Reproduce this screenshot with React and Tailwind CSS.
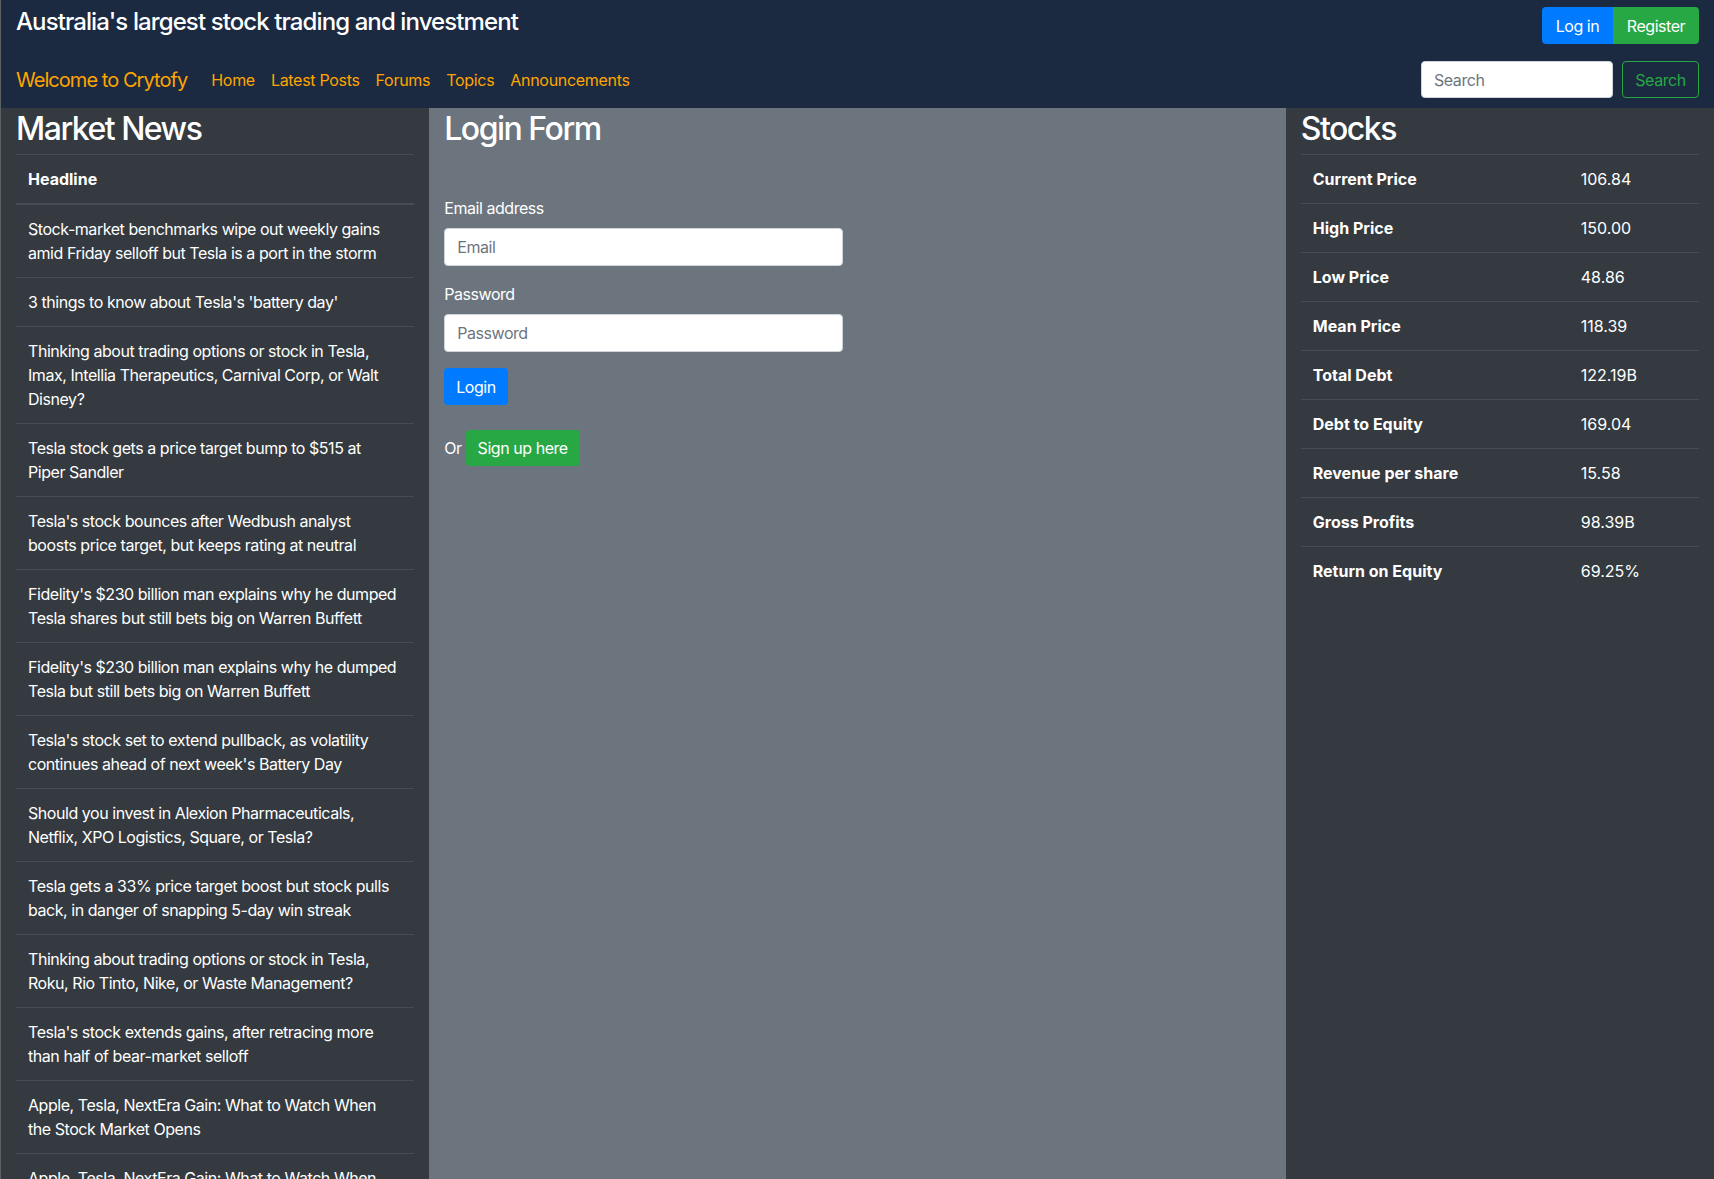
import { useState } from "react";

const headlines = [
  "Stock-market benchmarks wipe out weekly gains amid Friday selloff but Tesla is a port in the storm",
  "3 things to know about Tesla's 'battery day'",
  "Thinking about trading options or stock in Tesla, Imax, Intellia Therapeutics, Carnival Corp, or Walt Disney?",
  "Tesla stock gets a price target bump to $515 at Piper Sandler",
  "Tesla's stock bounces after Wedbush analyst boosts price target, but keeps rating at neutral",
  "Fidelity's $230 billion man explains why he dumped Tesla shares but still bets big on Warren Buffett",
  "Fidelity's $230 billion man explains why he dumped Tesla but still bets big on Warren Buffett",
  "Tesla's stock set to extend pullback, as volatility continues ahead of next week's Battery Day",
  "Should you invest in Alexion Pharmaceuticals, Netflix, XPO Logistics, Square, or Tesla?",
  "Tesla gets a 33% price target boost but stock pulls back, in danger of snapping 5-day win streak",
  "Thinking about trading options or stock in Tesla, Roku, Rio Tinto, Nike, or Waste Management?",
  "Tesla's stock extends gains, after retracing more than half of bear-market selloff",
  "Apple, Tesla, NextEra Gain: What to Watch When the Stock Market Opens",
  "Apple, Tesla, NextEra Gain: What to Watch When the Stock Market Opens",
];

const stocks = [
  ["Current Price", "106.84"],
  ["High Price", "150.00"],
  ["Low Price", "48.86"],
  ["Mean Price", "118.39"],
  ["Total Debt", "122.19B"],
  ["Debt to Equity", "169.04"],
  ["Revenue per share", "15.58"],
  ["Gross Profits", "98.39B"],
  ["Return on Equity", "69.25%"],
];

function Navbar() {
  const [query, setQuery] = useState("");
  return (
    <nav className="bg-[#1b2a41] px-[15px] pt-[7px] pb-[10px]">
      <div className="flex items-start justify-between">
        <h4 className="text-[24px] font-medium leading-[29px] tracking-[-0.9px] text-white">
          Australia's largest stock trading and investment
        </h4>
        <div className="flex">
          <button className="h-[37px] w-[71px] rounded-l bg-[#007bff] text-base text-white">
            Log in
          </button>
          <button className="h-[37px] w-[86px] rounded-r bg-[#28a745] text-base text-white">
            Register
          </button>
        </div>
      </div>
      <div className="mt-[17px] flex items-center justify-between">
        <div className="flex items-center tracking-[-0.3px]">
          <span className="mr-4 text-[20px] leading-[30px] tracking-[-0.95px] text-[#ffa500]">
            Welcome to Crytofy
          </span>
          <a className="px-2 text-base text-[#ffa500]">Home</a>
          <a className="px-2 text-base text-[#ffa500]">Latest Posts</a>
          <a className="px-2 text-base text-[#ffa500]">Forums</a>
          <a className="px-2 text-base text-[#ffa500]">Topics</a>
          <a className="px-2 text-base text-[#ffa500]">Announcements</a>
        </div>
        <div className="flex items-center">
          <input
            type="text"
            placeholder="Search"
            value={query}
            onChange={(e) => setQuery(e.target.value)}
            className="h-[37px] w-[192px] rounded border border-[#ced4da] bg-white px-3 text-base text-[#495057] placeholder:text-[#6c757d]"
          />
          <button className="ml-[9px] h-[37px] w-[77px] rounded border border-[#28a745] text-base text-[#28a745]">
            Search
          </button>
        </div>
      </div>
    </nav>
  );
}

function MarketNews() {
  return (
    <div className="bg-[#343a40] px-[15px]">
      <h2 className="mb-[6px] pt-[2px] text-[32px] font-medium leading-[38px] tracking-[-1.5px]">
        Market News
      </h2>
      <div className="text-base leading-6">
        <div className="border-t border-b-2 border-[#454d55] px-3 py-3 font-bold tracking-normal">
          Headline
        </div>
        {headlines.map((h, i) => (
          <div key={i} className={`${i > 0 ? "border-t" : ""} border-[#454d55] py-3 pl-3 pr-[14px]`}>
            {h}
          </div>
        ))}
      </div>
    </div>
  );
}

function LoginForm() {
  const [email, setEmail] = useState("");
  const [password, setPassword] = useState("");
  return (
    <div className="col-span-2 bg-[#6c757d] px-[15px]">
      <h2 className="mb-[6px] pt-[2px] text-[32px] font-medium leading-[38px] tracking-[-1.5px]">
        Login Form
      </h2>
      <form className="mt-[48px] w-[399px] text-base leading-6">
        <label className="mb-2 block">Email address</label>
        <input
          type="email"
          placeholder="Email"
          value={email}
          onChange={(e) => setEmail(e.target.value)}
          className="mb-4 block h-[38px] w-full rounded border border-[#ced4da] bg-white px-3 text-[#495057] placeholder:text-[#6c757d]"
        />
        <label className="mb-2 block">Password</label>
        <input
          type="password"
          placeholder="Password"
          value={password}
          onChange={(e) => setPassword(e.target.value)}
          className="mb-4 block h-[38px] w-full rounded border border-[#ced4da] bg-white px-3 text-[#495057] placeholder:text-[#6c757d]"
        />
        <button type="button" className="h-[37px] rounded bg-[#007bff] px-3 text-white">
          Login
        </button>
        <div className="mt-[25px] flex items-baseline gap-1">
          <span>Or</span>
          <button type="button" className="h-[36px] rounded bg-[#28a745] px-3 text-white">
            Sign up here
          </button>
        </div>
      </form>
    </div>
  );
}

function Stocks() {
  return (
    <div className="bg-[#343a40] px-[15px]">
      <h2 className="mb-[6px] pt-[2px] text-[32px] font-medium leading-[38px] tracking-[-1.5px]">
        Stocks
      </h2>
      <div className="text-base leading-6">
        {stocks.map(([label, value]) => (
          <div key={label} className="flex border-t border-[#454d55]">
            <div className="w-[268px] px-3 py-3 font-bold tracking-normal">{label}</div>
            <div className="px-3 py-3 tracking-normal">{value}</div>
          </div>
        ))}
      </div>
    </div>
  );
}

export default function App() {
  return (
    <div className="min-h-screen border-l border-[#5c6166] font-['Inter',sans-serif] tracking-[-0.45px] text-white">
      <Navbar />
      <div className="grid grid-cols-4">
        <MarketNews />
        <LoginForm />
        <Stocks />
      </div>
    </div>
  );
}
